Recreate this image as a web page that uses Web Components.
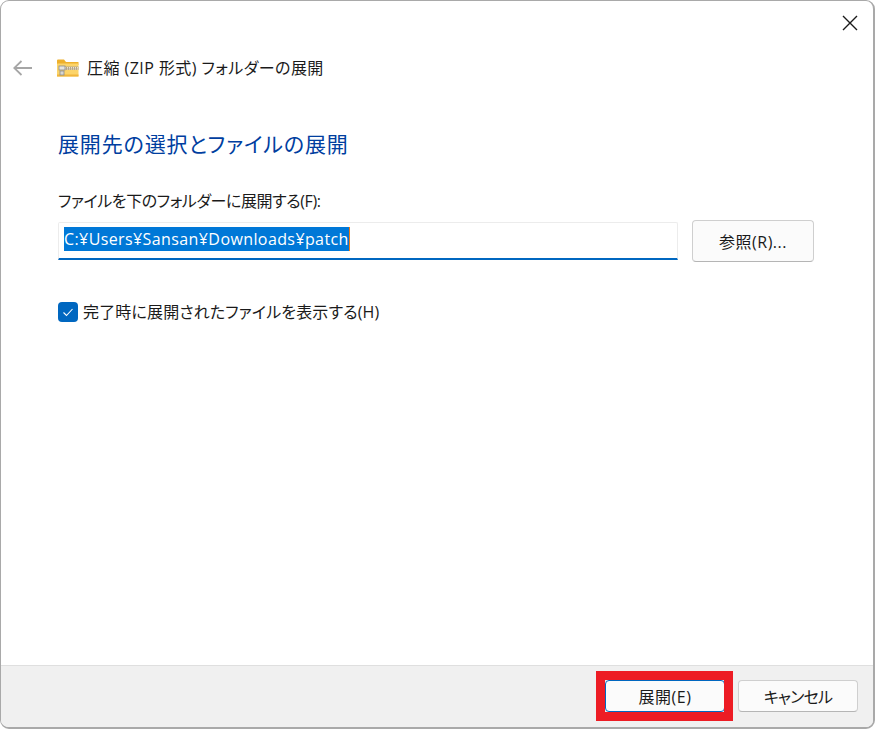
<!DOCTYPE html>
<html lang="ja">
<head>
<meta charset="utf-8">
<title>圧縮 (ZIP 形式) フォルダーの展開</title>
<style>
  html, body { margin: 0; padding: 0; background: #fff; }
  body { width: 875px; height: 729px; overflow: hidden; font-family: "Open Sans", "Noto Sans CJK JP", sans-serif; }
</style>
</head>
<body>
<zip-dialog>
  <dialog-header slot="header">圧縮 (ZIP 形式) フォルダーの展開</dialog-header>
  <dialog-heading>展開先の選択とファイルの展開</dialog-heading>
  <path-field label="ファイルを下のフォルダーに展開する(F):" value="C:¥Users¥Sansan¥Downloads¥patch" browse="参照(R)..."></path-field>
  <check-row>完了時に展開されたファイルを表示する(H)</check-row>
  <dialog-footer slot="footer">
    <win-button marked focused>展開(E)</win-button>
    <win-button tight>キャンセル</win-button>
  </dialog-footer>
</zip-dialog>

<script>
(() => {
  const FONT = '"Open Sans", "Noto Sans CJK JP", sans-serif';

  class ZipDialog extends HTMLElement {
    constructor() {
      super();
      this.attachShadow({ mode: 'open' }).innerHTML = `
        <style>
          :host {
            display: flex;
            flex-direction: column;
            box-sizing: border-box;
            width: 875px;
            height: 729px;
            border: 1px solid #a9a9a9;
            border-width: 1px 2px 2px 1px;
            border-radius: 9px;
            overflow: hidden;
            background: #fff;
            color: #1a1a1a;
            font-family: ${FONT};
            font-feature-settings: "palt";
          }
          .content { flex: 1; padding: 0 59px 0 57px; }
        </style>
        <slot name="header"></slot>
        <div class="content"><slot></slot></div>
        <slot name="footer"></slot>
      `;
    }
  }

  class DialogHeader extends HTMLElement {
    constructor() {
      super();
      this.attachShadow({ mode: 'open' }).innerHTML = `
        <style>
          :host { display: block; height: 127px; }
          .close { display: flex; justify-content: flex-end; height: 43px; padding-right: 14px; align-items: flex-end; box-sizing: border-box; padding-bottom: 12px; }
          .row { display: flex; align-items: center; height: 48px; padding-left: 12px; }
          .back { margin-right: 24px; }
          .folder { margin-right: 8px; }
          .title { font-size: 16px; line-height: 24px; color: #1a1a1a; letter-spacing: 0.45px; }
          svg { display: block; }
        </style>
        <div class="close">
          <svg width="18" height="18" viewBox="0 0 18 18"><path d="M2 2 L16 16 M16 2 L2 16" stroke="#1a1a1a" stroke-width="1.4" fill="none"/></svg>
        </div>
        <div class="row">
          <svg class="back" width="20" height="16" viewBox="0 0 20 16"><path d="M1 8 H19 M8.5 1 L1.2 8 L8.5 15" stroke="#a6a6a6" stroke-width="1.8" fill="none"/></svg>
          <svg class="folder" width="22" height="18" viewBox="0 0 22 18">
            <path d="M0 1.5 a1 1 0 0 1 1 -1 H7 L9 3 H21.5 V6 H0 Z" fill="#eeb02c"/>
            <rect x="0" y="4.5" width="21.5" height="13" rx="0.6" fill="#fcd469"/>
            <rect x="0" y="15.5" width="21.5" height="2" fill="#f1b63c"/>
            <rect x="8" y="7.5" width="13.5" height="3.4" fill="#b4a58a"/>
            <path d="M8 8.6 H21.5 M8 10 H21.5" stroke="#f5efdf" stroke-width="0.9" stroke-dasharray="1 1"/>
            <rect x="2" y="7" width="6" height="4" fill="#e6e4de" stroke="#8c8c8c" stroke-width="0.8"/>
            <rect x="3" y="12" width="4" height="4" fill="#d8d6d0" stroke="#8c8c8c" stroke-width="0.8"/>
          </svg>
          <span class="title"><slot></slot></span>
        </div>
      `;
    }
  }

  class DialogHeading extends HTMLElement {
    constructor() {
      super();
      this.attachShadow({ mode: 'open' }).innerHTML = `
        <style>
          :host { display: block; font-size: 21px; line-height: 32px; letter-spacing: 0.85px; color: #003e9f; margin-bottom: 29px; }
        </style>
        <slot></slot>
      `;
    }
  }

  class PathField extends HTMLElement {
    constructor() {
      super();
      this.attachShadow({ mode: 'open' });
    }
    connectedCallback() {
      const label = this.getAttribute('label') || '';
      const value = this.getAttribute('value') || '';
      const browse = this.getAttribute('browse') || '';
      this.shadowRoot.innerHTML = `
        <style>
          :host { display: block; }
          .label { font-size: 16px; line-height: 24px; letter-spacing: -0.4px; margin-bottom: 7px; color: #1a1a1a; }
          .row { display: flex; align-items: center; gap: 14px; }
          .input {
            flex: 1;
            box-sizing: border-box;
            height: 38px;
            padding: 4px 5px 0;
            background: #fff;
            border: 1px solid #ececec;
            border-bottom: 2px solid #0067c0;
            border-radius: 2px 2px 0 0;
          }
          .sel {
            display: inline-block;
            height: 24px;
            line-height: 24px;
            font-size: 16px;
            letter-spacing: 0.4px;
            background: #0078d7;
            color: #fff;
            border-right: 1px solid #f07a10;
            white-space: nowrap;
          }
          win-button { --btn-w: 122px; --btn-h: 42px; }
        </style>
        <div class="label">${label}</div>
        <div class="row">
          <div class="input"><span class="sel">${value}</span></div>
          <win-button>${browse}</win-button>
        </div>
      `;
    }
  }

  class CheckRow extends HTMLElement {
    constructor() {
      super();
      this.attachShadow({ mode: 'open' }).innerHTML = `
        <style>
          :host { display: flex; align-items: center; gap: 5px; margin-top: 38px; font-size: 16px; line-height: 24px; letter-spacing: 0.15px; color: #1a1a1a; }
          .box { width: 20px; height: 20px; border-radius: 4px; background: #0067c0; display: flex; align-items: center; justify-content: center; }
        </style>
        <span class="box">
          <svg width="12" height="12" viewBox="0 0 12 12"><path d="M1.5 6.5 L4.5 9.5 L10.5 3" stroke="#fff" stroke-width="1.1" fill="none"/></svg>
        </span>
        <span><slot></slot></span>
      `;
    }
  }

  class DialogFooter extends HTMLElement {
    constructor() {
      super();
      this.attachShadow({ mode: 'open' }).innerHTML = `
        <style>
          :host {
            display: flex;
            justify-content: flex-end;
            align-items: center;
            gap: 13px;
            height: 62px;
            box-sizing: border-box;
            padding: 0 15px 1px 0;
            background: #f0f0f0;
            border-top: 1px solid #dfdfdf;
            --btn-w: 120px;
            --btn-h: 32px;
          }
        </style>
        <slot></slot>
      `;
    }
  }

  class WinButton extends HTMLElement {
    constructor() {
      super();
      this.attachShadow({ mode: 'open' }).innerHTML = `
        <style>
          :host {
            position: relative;
            display: flex;
            align-items: center;
            justify-content: center;
            flex: none;
            box-sizing: border-box;
            width: var(--btn-w, 120px);
            height: var(--btn-h, 32px);
            background: #fbfbfb;
            border: 1px solid #cfcfcf;
            border-bottom-color: #b5b5b5;
            border-radius: 4px;
            font-size: 16px;
            letter-spacing: 0.5px;
            color: #1a1a1a;
          }
          :host([tight]) { letter-spacing: -0.8px; }
          :host([focused]) { border-color: #0067c0; }
          /* red annotation frame laid over the screenshot */
          :host([marked])::after {
            content: '';
            position: absolute;
            inset: -10px -9px -10px -10px;
            border: 9px solid #ed1c24;
            pointer-events: none;
          }
        </style>
        <slot></slot>
      `;
    }
  }

  // win-button first so that path-field's inner one upgrades at once
  customElements.define('win-button', WinButton);
  customElements.define('zip-dialog', ZipDialog);
  customElements.define('dialog-header', DialogHeader);
  customElements.define('dialog-heading', DialogHeading);
  customElements.define('path-field', PathField);
  customElements.define('check-row', CheckRow);
  customElements.define('dialog-footer', DialogFooter);
})();
</script>
</body>
</html>
